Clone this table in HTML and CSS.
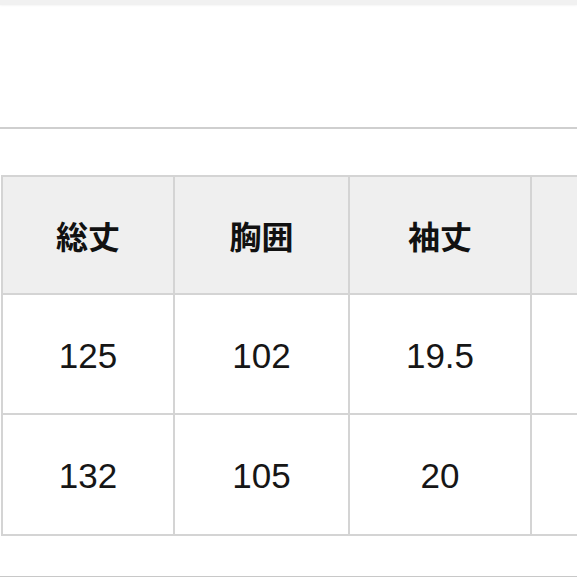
FILE: index.html
```html
<!DOCTYPE html>
<html lang="ja">
<head>
<meta charset="utf-8">
<title>サイズ表</title>
<link rel="stylesheet" href="styles.css">
</head>
<body>
<div class="topbar"></div>
<div class="blank"></div>
<div class="size-table">
  <div class="cell head">総丈</div>
  <div class="cell head">胸囲</div>
  <div class="cell head">袖丈</div>
  <div class="cell head"></div>
  <div class="cell">125</div>
  <div class="cell">102</div>
  <div class="cell">19.5</div>
  <div class="cell"></div>
  <div class="cell">132</div>
  <div class="cell">105</div>
  <div class="cell">20</div>
  <div class="cell"></div>
</div>
<div class="bottom-line"></div>
</body>
</html>
```

FILE: styles.css
```css
html, body {
  margin: 0;
  padding: 0;
  background: #ffffff;
  overflow: hidden;
  width: 577px;
  height: 577px;
}
body {
  font-family: "Liberation Sans", "Noto Sans CJK JP", sans-serif;
  color: #161616;
}
.topbar {
  height: 5px;
  background: #f1f1f1;
  box-shadow: 0 1px 2px rgba(0, 0, 0, 0.04);
}
.blank {
  height: 122px;
  border-bottom: 2px solid #cfcfcf;
}
.size-table {
  margin-top: 46px;
  margin-left: 1px;
  display: grid;
  grid-template-columns: 172px 175px 182px 182px;
  grid-template-rows: 118px 120px 121px;
  width: 713px;
  border-top: 2px solid #d4d4d4;
  border-left: 2px solid #d4d4d4;
}
.cell {
  box-sizing: border-box;
  border-right: 2px solid #d4d4d4;
  border-bottom: 2px solid #d4d4d4;
  display: flex;
  align-items: center;
  justify-content: center;
  padding-top: 3px;
  font-size: 35px;
  font-family: "Liberation Sans", "Noto Sans CJK JP", sans-serif;
}
.head {
  background: #efefef;
  padding-top: 0;
  font-family: "Noto Sans CJK JP", sans-serif;
  font-weight: 700;
  font-size: 32px;
  color: #111;
}
.bottom-line {
  margin-top: 40px;
  height: 1px;
  background: #c8c8c8;
}
```
